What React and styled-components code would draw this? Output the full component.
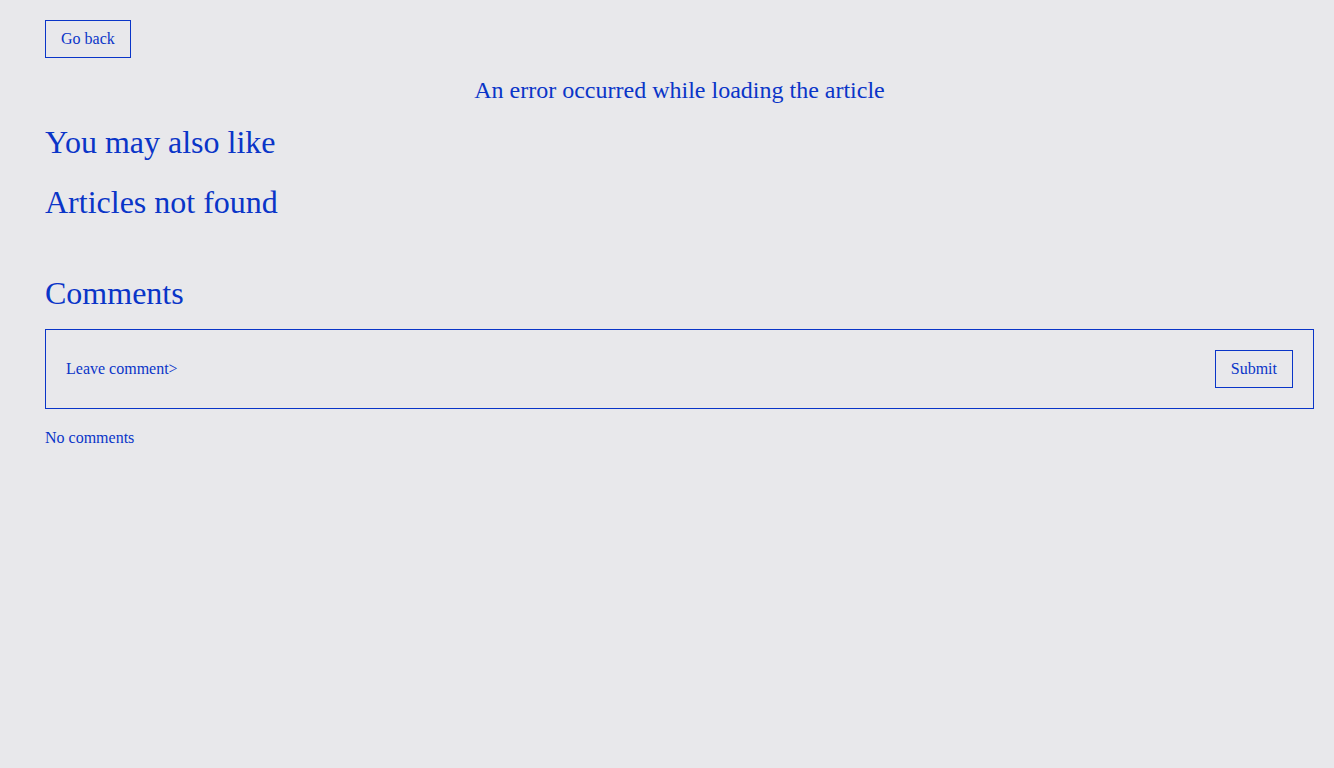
import styled, { createGlobalStyle } from 'styled-components';

const GlobalStyle = createGlobalStyle`
  body {
    margin: 0;
    background: #e8e8eb;
    font-family: "Liberation Serif", "Times New Roman", serif;
    color: #0a35c8;
  }
`;

const Page = styled.main`
  padding: 20px 20px 40px 45px;
`;

const Button = styled.button`
  font-family: inherit;
  font-size: 16px;
  line-height: 20px;
  color: #0a35c8;
  background: transparent;
  border: 1px solid #0a35c8;
  padding: 8px 15px;
  cursor: pointer;
`;

const ErrorText = styled.p`
  margin: 17px 0 0;
  text-align: center;
  font-size: 24px;
  line-height: 30px;
`;

const Heading = styled.h2`
  margin: ${(props) => props.$top || '18px'} 0 0;
  font-size: 32px;
  font-weight: normal;
  line-height: 40px;
`;

const CommentForm = styled.form`
  margin-top: 16px;
  display: flex;
  align-items: center;
  justify-content: space-between;
  padding: 20px;
  border: 1px solid #0a35c8;
`;

const CommentInput = styled.input`
  flex: 1;
  font-family: inherit;
  font-size: 16px;
  color: #0a35c8;
  background: transparent;
  border: none;
  outline: none;
  padding: 0;
  &::placeholder {
    color: #0a35c8;
    opacity: 1;
  }
`;

const Empty = styled.p`
  margin: 20px 0 0;
  font-size: 16px;
`;

function App() {
  return (
    <>
      <GlobalStyle />
      <Page>
        <Button>Go back</Button>
        <ErrorText>An error occurred while loading the article</ErrorText>
        <Heading $top="17px">You may also like</Heading>
        <Heading $top="20px">Articles not found</Heading>
        <Heading $top="51px">Comments</Heading>
        <CommentForm onSubmit={(e) => e.preventDefault()}>
          <CommentInput placeholder="Leave comment>" />
          <Button type="submit">Submit</Button>
        </CommentForm>
        <Empty>No comments</Empty>
      </Page>
    </>
  );
}

export default App;
